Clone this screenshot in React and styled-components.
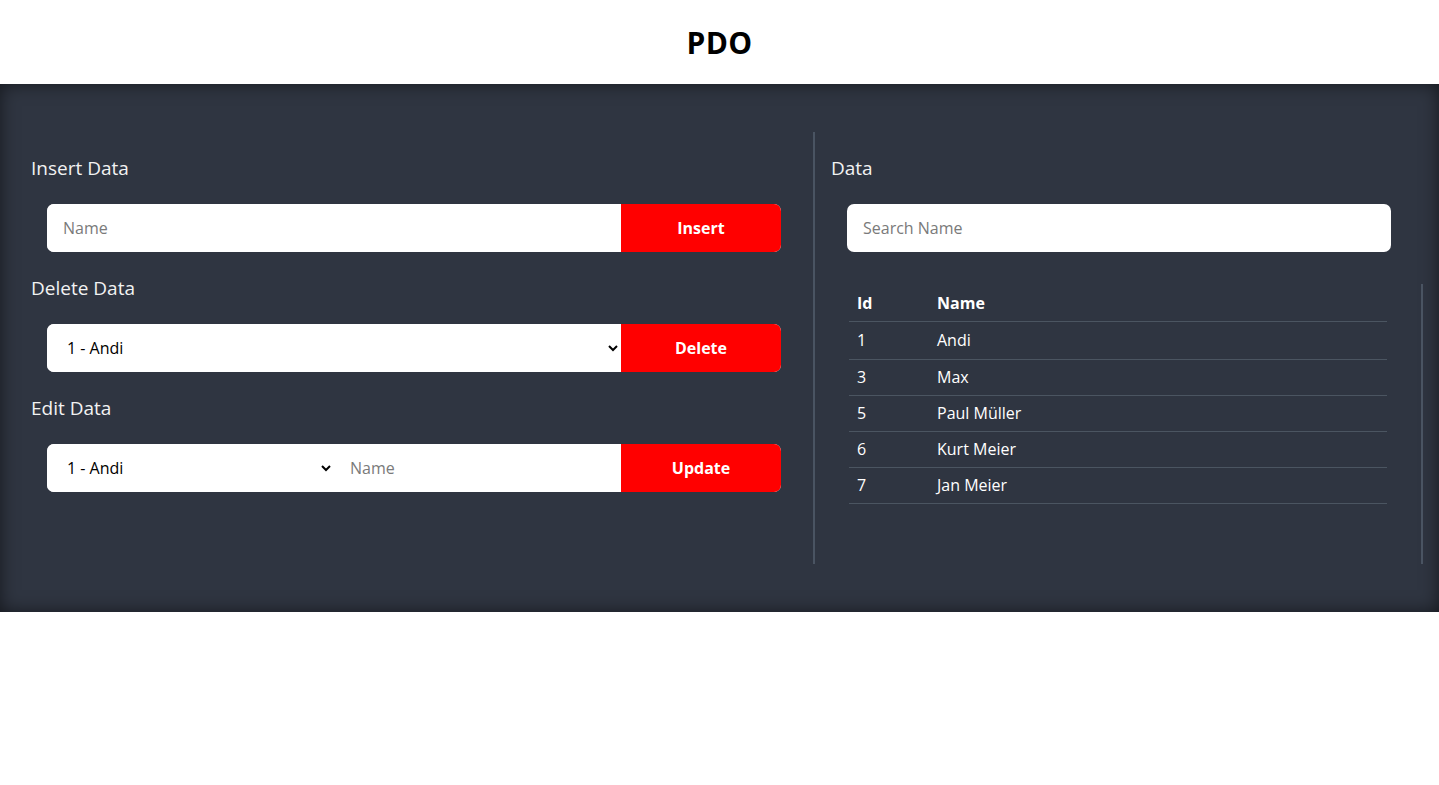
import React from "react";
import styled, { createGlobalStyle } from "styled-components";

const rows = [
  { id: 1, name: "Andi" },
  { id: 3, name: "Max" },
  { id: 5, name: "Paul Müller" },
  { id: 6, name: "Kurt Meier" },
  { id: 7, name: "Jan Meier" },
];

const App = () => {
  return (
    <>
      <GlobalStyle />
      <Header>
        <Title>PDO</Title>
      </Header>
      <Main>
        <LeftCol>
          <Heading>Insert Data</Heading>
          <Group>
            <TextInput placeholder="Name" type="text" />
            <RedBtn>Insert</RedBtn>
          </Group>

          <Heading>Delete Data</Heading>
          <Group>
            <Select defaultValue="1">
              {rows.map((r) => (
                <option key={r.id} value={r.id}>
                  {r.id} - {r.name}
                </option>
              ))}
            </Select>
            <RedBtn>Delete</RedBtn>
          </Group>

          <Heading>Edit Data</Heading>
          <Group>
            <Select defaultValue="1" $basis="287px">
              {rows.map((r) => (
                <option key={r.id} value={r.id}>
                  {r.id} - {r.name}
                </option>
              ))}
            </Select>
            <TextInput placeholder="Name" type="text" />
            <RedBtn>Update</RedBtn>
          </Group>
        </LeftCol>

        <RightCol>
          <Heading>Data</Heading>
          <Group>
            <TextInput placeholder="Search Name" type="text" />
          </Group>
          <TableWrap>
            <Table>
              <thead>
                <tr>
                  <Th $w="80px">Id</Th>
                  <Th>Name</Th>
                </tr>
              </thead>
              <tbody>
                {rows.map((r) => (
                  <tr key={r.id}>
                    <Td>{r.id}</Td>
                    <Td>{r.name}</Td>
                  </tr>
                ))}
              </tbody>
            </Table>
          </TableWrap>
        </RightCol>
      </Main>
    </>
  );
};

export default App;

const GlobalStyle = createGlobalStyle`
  * { box-sizing: border-box; }
  body {
    margin: 0;
    background: #fff;
    font-family: "Open Sans", "Liberation Sans", sans-serif;
  }
`;

const Header = styled.header`
  height: 84px;
  display: flex;
  align-items: center;
  justify-content: center;
  background: #fff;
`;

const Title = styled.h1`
  margin: 0;
  font-size: 30px;
  font-weight: 700;
  color: #000;
  letter-spacing: 0.3px;
`;

const Main = styled.main`
  display: grid;
  grid-template-columns: 800px 608px;
  padding: 48px 16px 48px 15px;
  background: #2f3541;
  box-shadow: inset 0 0 18px rgba(0, 0, 0, 0.55);
`;

const LeftCol = styled.section`
  height: 432px;
  padding: 0 16px;
  border-right: 2px solid #4a5462;
`;

const RightCol = styled.section`
  height: 432px;
  padding: 0 16px;
  display: flex;
  flex-direction: column;
`;

const Heading = styled.h2`
  margin: 24px 0;
  font-size: 19px;
  line-height: 24px;
  font-weight: 400;
  color: #f2f2f2;
`;

const Group = styled.div`
  display: flex;
  height: 48px;
  margin: 0 16px;
  border-radius: 7px;
  overflow: hidden;
  background: #fff;
`;

const TextInput = styled.input`
  flex: 1 1 0;
  min-width: 0;
  height: 100%;
  border: none;
  outline: none;
  padding: 0 16px;
  font-family: inherit;
  font-size: 16px;
  color: #222;
  background: #fff;

  &::placeholder {
    color: #7a7a7a;
  }
`;

const Select = styled.select`
  flex: ${(p) => (p.$basis ? `0 0 ${p.$basis}` : "1 1 0")};
  min-width: 0;
  height: 100%;
  border: none;
  outline: none;
  padding: 0 4px 0 16px;
  font-family: inherit;
  font-size: 16px;
  color: #000;
  background: #fff;
`;

const RedBtn = styled.button`
  width: 160px;
  flex: none;
  height: 100%;
  border: none;
  background: #ff0000;
  color: #fff;
  font-family: inherit;
  font-size: 16px;
  font-weight: 700;
  cursor: pointer;
`;

const TableWrap = styled.div`
  margin: 32px -16px 0 0;
  height: 280px;
  padding: 0 34px 0 18px;
  border-right: 2px solid #4a5462;
`;

const Table = styled.table`
  width: 100%;
  border-collapse: collapse;
  color: #fff;
  font-size: 16px;
`;

const Th = styled.th`
  text-align: left;
  font-weight: 700;
  height: 37px;
  padding: 2px 8px 0;
  width: ${(p) => p.$w || "auto"};
  border-bottom: 1px solid #4b5561;
`;

const Td = styled.td`
  height: 36px;
  padding: 0 8px;
  border-bottom: 1px solid #4b5561;

  tr:first-child > & {
    height: 38px;
  }
`;
